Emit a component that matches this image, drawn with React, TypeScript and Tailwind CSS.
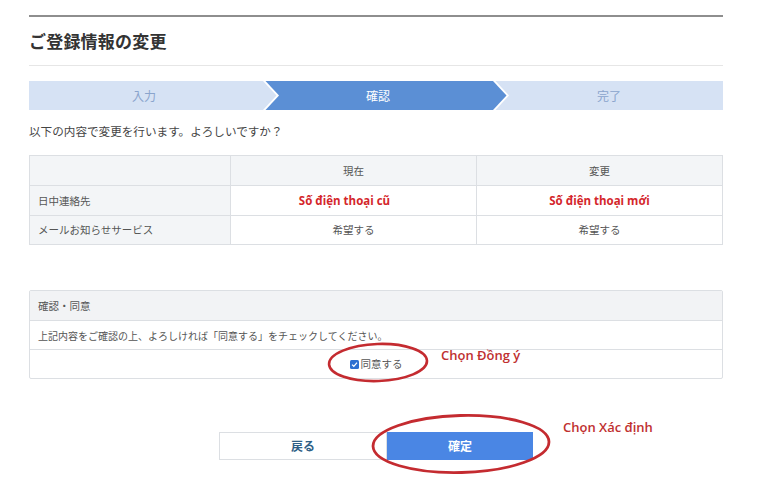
import React from "react";

const jp = "font-['Noto_Sans_CJK_JP','Noto_Sans',sans-serif]";
const vi = "font-['Open_Sans','Noto_Sans',sans-serif]";

function Chevron({ fill }: { fill: string }) {
  return (
    <svg width="17" height="29" viewBox="0 0 17 29" className="block">
      <polygon points="0,0 2.5,0 16,14.5 2.5,29 0,29" fill="#ffffff" />
      <polygon points="0,0 13.5,14.5 0,29" fill={fill} />
    </svg>
  );
}

export default function App() {
  return (
    <div className={`relative w-[768px] h-[498px] bg-white overflow-hidden text-[#333] ${jp}`}>
      <div className="ml-[29px] w-[694px] pt-[15px] flex flex-col">
        <div className="h-[2px] bg-[#8e8e8e]" />
        <h1 className="h-[48px] flex items-center text-[17px] font-bold text-[#333] tracking-[0.2px]">
          ご登録情報の変更
        </h1>
        <div className="h-px bg-[#e6e6e6]" />

        {/* steps */}
        <div className="mt-[15px] h-[29px] flex">
          <div className="relative w-[234px] bg-[#d6e2f4] flex items-center justify-center text-[12px] text-[#8aa4cc] pr-[4px]">
            入力
            <div className="absolute left-full top-0 z-10">
              <Chevron fill="#d6e2f4" />
            </div>
          </div>
          <div className="relative w-[230px] bg-[#5b8fd5] flex items-center justify-center text-[12px] text-white">
            確認
            <div className="absolute left-full top-0 z-10">
              <Chevron fill="#5b8fd5" />
            </div>
          </div>
          <div className="flex-1 bg-[#d6e2f4] flex items-center justify-center text-[12px] text-[#8aa4cc] pl-[2px]">
            完了
          </div>
        </div>

        <p className="mt-[13px] leading-[16px] text-[11.6px] text-[#444]">
          以下の内容で変更を行います。よろしいですか？
        </p>

        {/* table */}
        <div className="mt-[16px] grid grid-cols-[201px_246px_1fr] border-l border-t border-[#dcdfe3] text-[10.5px] text-[#555]">
          <div className="h-[30px] bg-[#f3f5f7] border-r border-b border-[#dcdfe3]" />
          <div className="h-[30px] bg-[#f3f5f7] border-r border-b border-[#dcdfe3] flex items-center justify-center">現在</div>
          <div className="h-[30px] bg-[#f3f5f7] border-r border-b border-[#dcdfe3] flex items-center justify-center">変更</div>

          <div className="h-[30px] bg-[#f3f5f7] border-r border-b border-[#dcdfe3] flex items-center pl-[8px]">日中連絡先</div>
          <div className={`h-[30px] border-r border-b border-[#dcdfe3] flex items-center justify-center pr-[18px] text-[11.5px] font-bold text-[#d4262b] ${vi}`}>
            Số điện thoại cũ
          </div>
          <div className={`h-[30px] border-r border-b border-[#dcdfe3] flex items-center justify-center text-[11.5px] font-bold text-[#d4262b] ${vi}`}>
            Số điện thoại mới
          </div>

          <div className="h-[29px] bg-[#f3f5f7] border-r border-b border-[#dcdfe3] flex items-center pl-[8px]">メールお知らせサービス</div>
          <div className="h-[29px] border-r border-b border-[#dcdfe3] flex items-center justify-center">希望する</div>
          <div className="h-[29px] border-r border-b border-[#dcdfe3] flex items-center justify-center">希望する</div>
        </div>

        {/* confirm */}
        <div className="mt-[45px] border border-[#dcdfe3] rounded-[2px] text-[10.5px] text-[#555] flex flex-col">
          <div className="h-[30px] bg-[#f2f3f5] border-b border-[#dcdfe3] flex items-center pl-[8px]">確認・同意</div>
          <div className="h-[29px] border-b border-[#dcdfe3] flex items-center pl-[8px] text-[10px]">
            上記内容をご確認の上、よろしければ「同意する」をチェックしてください。
          </div>
          <div className="h-[28px] flex items-center justify-center gap-[2px]">
            <span className="w-[9px] h-[9px] rounded-[1.5px] bg-[#2e6fd1] flex items-center justify-center">
              <svg width="7" height="7" viewBox="0 0 10 10">
                <path d="M1.5 5.2 L4 7.6 L8.6 2.4" stroke="#fff" strokeWidth="1.8" fill="none" />
              </svg>
            </span>
            <span>同意する</span>
          </div>
        </div>

        {/* buttons */}
        <div className="mt-[53px] flex justify-center">
          <button className="w-[168px] h-[28px] border border-[#dcdfe3] bg-white text-[12px] font-bold text-[#2f5f86]">
            戻る
          </button>
          <button className="w-[146px] h-[28px] bg-[#4a86e4] text-[12px] font-bold text-white">
            確定
          </button>
        </div>
      </div>

      {/* annotations */}
      <svg className="absolute left-0 top-0 pointer-events-none" width="768" height="498">
        <ellipse cx="378" cy="362.5" rx="49" ry="18.5" fill="none" stroke="#c42b30" strokeWidth="2.6" transform="rotate(-2 378 362)" />
        <ellipse cx="461" cy="444" rx="88" ry="28.5" fill="none" stroke="#c42b30" strokeWidth="2.8" transform="rotate(-1.5 461 444)" />
      </svg>
      <span className={`absolute left-[441px] top-[346px] text-[13px] font-semibold text-[#c0302f] ${vi}`}>
        Chọn Đồng ý
      </span>
      <span className={`absolute left-[563px] top-[418px] text-[13px] font-semibold text-[#c0302f] ${vi}`}>
        Chọn Xác định
      </span>
    </div>
  );
}
